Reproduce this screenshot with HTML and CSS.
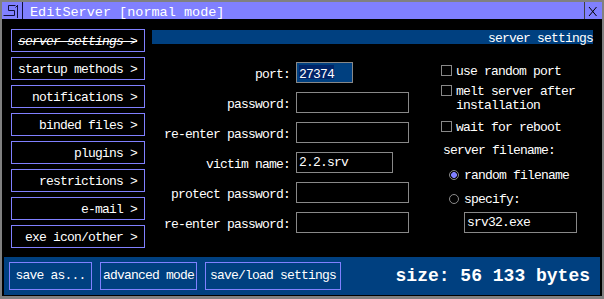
FILE: index.html
```html
<!DOCTYPE html>
<html>
<head>
<meta charset="utf-8">
<title>EditServer</title>
<link rel="stylesheet" href="styles.css">
</head>
<body>
<div class="window">
  <div class="titlebar">
    <svg class="logo" width="21" height="17" viewBox="0 0 21 17"><path d="M13.5 3.5H6.5V8.5H12.5V13.5H1.5M15.5 3V16M13.5 5.5L15.5 3.5M20.5 0V17" fill="none" stroke="#10103a" stroke-width="1"/></svg>
    <div class="title">EditServer [normal mode]</div>
    <div class="close"><svg width="17" height="17" viewBox="0 0 17 17"><path d="M4 5L11.5 14M11.5 5L4 14" fill="none" stroke="#000" stroke-width="1"/></svg></div>
  </div>
  <div class="main">
    <nav class="menu">
      <div class="menu-btn current">server settings &gt;</div>
      <div class="menu-btn">startup methods &gt;</div>
      <div class="menu-btn">notifications &gt;</div>
      <div class="menu-btn">binded files &gt;</div>
      <div class="menu-btn">plugins &gt;</div>
      <div class="menu-btn">restrictions &gt;</div>
      <div class="menu-btn">e-mail &gt;</div>
      <div class="menu-btn">exe icon/other &gt;</div>
    </nav>
    <section class="content">
      <div class="header">server settings</div>
      <div class="panes">
        <div class="form">
          <div class="label">port:</div>
          <div class="field port w-port"><span class="sel">27374</span></div>
          <div class="label">password:</div>
          <div class="field w-full"></div>
          <div class="label">re-enter password:</div>
          <div class="field w-full"></div>
          <div class="label">victim name:</div>
          <div class="field w-victim">2.2.srv</div>
          <div class="label">protect password:</div>
          <div class="field w-full"></div>
          <div class="label">re-enter password:</div>
          <div class="field w-full"></div>
        </div>
        <div class="options">
          <div class="check"><span class="box"></span><span class="opt-text">use random port</span></div>
          <div class="check row2"><span class="box"></span><span class="opt-text">melt server after<br>installation</span></div>
          <div class="check row3"><span class="box"></span><span class="opt-text">wait for reboot</span></div>
          <div class="opt-label">server filename:</div>
          <div class="radio-row r1"><span class="radio checked"></span><span class="opt-text">random filename</span></div>
          <div class="radio-row r2"><span class="radio"></span><span class="opt-text">specify:</span></div>
          <div class="field name-field">srv32.exe</div>
        </div>
      </div>
    </section>
  </div>
  <div class="bottombar">
    <div class="bbtn b1">save as...</div>
    <div class="bbtn b2">advanced mode</div>
    <div class="bbtn b3">save/load settings</div>
    <div class="size">size: 56 133 bytes</div>
  </div>
</div>
</body>
</html>
```
FILE: styles.css
```css
html, body {
  margin: 0;
  padding: 0;
  background: #000;
}
body {
  font-family: "Liberation Mono", "DejaVu Sans Mono", monospace;
  color: #fff;
}
.window {
  width: 604px;
  height: 299px;
  box-sizing: border-box;
  border-style: solid;
  border-color: #808080;
  border-width: 2px 2px 3px 2px;
  background: #000;
  display: flex;
  flex-direction: column;
}
.titlebar {
  height: 17px;
  background: #8080ff;
  display: flex;
  flex: none;
}
.logo {
  display: block;
  flex: none;
}
.title {
  flex: 1;
  margin-left: 7px;
  padding-top: 5px;
  font-size: 13.5px;
  line-height: 12px;
  color: #fff;
  white-space: nowrap;
}
.close {
  width: 17px;
  border-left: 1px solid #404040;
  background: #8080ff;
  flex: none;
}
.close svg { display: block; }

.main {
  height: 238px;
  flex: none;
  display: flex;
  padding: 10px 0 0 9px;
  box-sizing: border-box;
}
.menu {
  width: 134px;
  display: flex;
  flex-direction: column;
  gap: 5px;
  flex: none;
}
.menu-btn {
  height: 23px;
  box-sizing: border-box;
  border: 1px solid #8080ff;
  text-align: right;
  padding: 2px 7px 0 0;
  font-size: 13px;
  letter-spacing: -0.8px;
  line-height: 19px;
  white-space: nowrap;
}
.menu-btn.current {
  font-style: italic;
  text-decoration: line-through;
}
.content {
  width: 441px;
  margin-left: 7px;
  padding-top: 1px;
  flex: none;
}
.header {
  height: 14px;
  box-sizing: border-box;
  background: #004080;
  text-align: right;
  padding-top: 3px;
  font-size: 13px;
  letter-spacing: -0.8px;
  line-height: 11px;
}
.panes {
  display: flex;
  align-items: flex-start;
  padding-top: 18px;
}
.form {
  display: grid;
  grid-template-columns: 138px 113px;
  grid-auto-rows: 21px;
  column-gap: 6px;
  row-gap: 9px;
  font-size: 13px;
  letter-spacing: -0.8px;
}
.label {
  text-align: right;
  padding-top: 4px;
  line-height: 17px;
  white-space: nowrap;
}
.field {
  height: 21px;
  box-sizing: border-box;
  border: 1px solid #888;
  padding-left: 2px;
  line-height: 19px;
  font-size: 13px;
  letter-spacing: -0.8px;
  white-space: nowrap;
  justify-self: start;
}
.w-port { width: 57px; }
.w-victim { width: 97px; }
.w-full { width: 113px; }
.field.port {
  background: #004080;
  padding-top: 2px;
  line-height: 14px;
}
.sel {
  display: inline-block;
  vertical-align: top;
  height: 14px;
  line-height: 19px;
  background: #002468;
}
.options {
  margin-left: 32px;
  margin-top: 3px;
  width: 152px;
  display: flex;
  flex-direction: column;
  font-size: 13px;
  letter-spacing: -0.8px;
  line-height: 14px;
}
.check {
  display: flex;
  align-items: flex-start;
}
.box {
  width: 11px;
  height: 11px;
  box-sizing: border-box;
  border: 1px solid #888;
  flex: none;
}
.opt-text {
  margin-left: 4px;
  white-space: nowrap;
}
.check.row2 { margin-top: 6px; }
.check.row3 { margin-top: 8px; }
.opt-label {
  margin-top: 9px;
  padding-left: 2px;
}
.radio-row {
  display: flex;
  align-items: flex-start;
  padding-left: 8px;
}
.radio-row .opt-text { margin-left: 5px; }
.radio-row.r1 { margin-top: 11px; }
.radio-row.r2 { margin-top: 10px; }
.radio {
  width: 10px;
  height: 10px;
  margin-top: 1px;
  box-sizing: border-box;
  border: 1px solid #8a8a8a;
  border-radius: 50%;
  flex: none;
}
.radio.checked {
  background: radial-gradient(circle, #8080ff 0 2.6px, transparent 3.2px);
}
.name-field {
  margin-top: 5px;
  margin-left: 23px;
  width: 113px;
}
.bottombar {
  height: 38px;
  margin: 0 2px 1px 2px;
  background: #004080;
  display: flex;
  align-items: center;
  padding-left: 5px;
  gap: 8px;
  flex: none;
}
.bbtn {
  height: 28px;
  box-sizing: border-box;
  border: 1px solid #8080ff;
  text-align: center;
  font-size: 13px;
  letter-spacing: -0.8px;
  line-height: 26px;
  white-space: nowrap;
}
.b1 { width: 83px; }
.b2 { width: 97px; }
.b3 { width: 136px; }
.size {
  margin-left: auto;
  padding-right: 10px;
  font-size: 18px;
  font-weight: bold;
  line-height: 18px;
  white-space: nowrap;
}
```
